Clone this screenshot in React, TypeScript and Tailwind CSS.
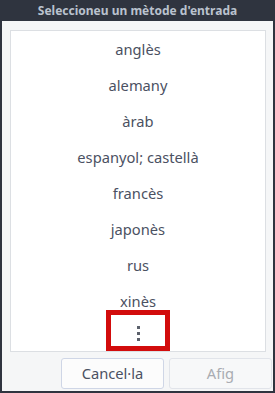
import React from "react";

const items = ["anglès", "alemany", "àrab", "espanyol; castellà", "francès", "japonès", "rus", "xinès"];

export default function App() {
  return (
    <div
      className="w-[275px] h-[393px] bg-[#2f343f] flex flex-col px-[2px] pb-[2px]"
      style={{ fontFamily: '"Noto Sans", "DejaVu Sans", sans-serif' }}
    >
      <div className="h-[21px] flex items-center justify-center text-[12px] font-bold text-[#bac2ce] leading-none">
        Seleccioneu un mètode d'entrada
      </div>
      <div className="flex-1 bg-[#f5f6f7] flex flex-col pl-[8px] pr-[1px] pt-[9px]">
        <div className="relative h-[322px] mr-[6px] bg-white border border-[#dcdfe3] flex flex-col">
          {items.map((t) => (
            <div key={t} className="h-[36px] flex items-center justify-center text-[14.7px] text-[#4b5162]">
              {t}
            </div>
          ))}
          <div className="flex-1 flex flex-col items-center justify-center gap-[3px] pb-[3px]">
            <div className="w-[3px] h-[3px] bg-[#5c616c]" />
            <div className="w-[3px] h-[3px] bg-[#5c616c]" />
            <div className="w-[3px] h-[3px] bg-[#5c616c]" />
          </div>
          <div className="absolute left-[95px] top-[279px] w-[64px] h-[41px] border-[5px] border-[#d20c0c]" />
        </div>
        <div className="flex justify-end gap-[5px] mt-[6px]">
          <div className="w-[103px] h-[31px] rounded-[3px] border border-[#cfd6e6] bg-[#fcfcfc] flex items-center justify-center text-[14.7px] text-[#4b5162]">
            Cancel·la
          </div>
          <div className="w-[103px] h-[31px] rounded-[3px] border border-[#e1e4ea] bg-[#f7f8f9] flex items-center justify-center text-[14.7px] text-[#a9acb2]">
            Afig
          </div>
        </div>
      </div>
    </div>
  );
}
